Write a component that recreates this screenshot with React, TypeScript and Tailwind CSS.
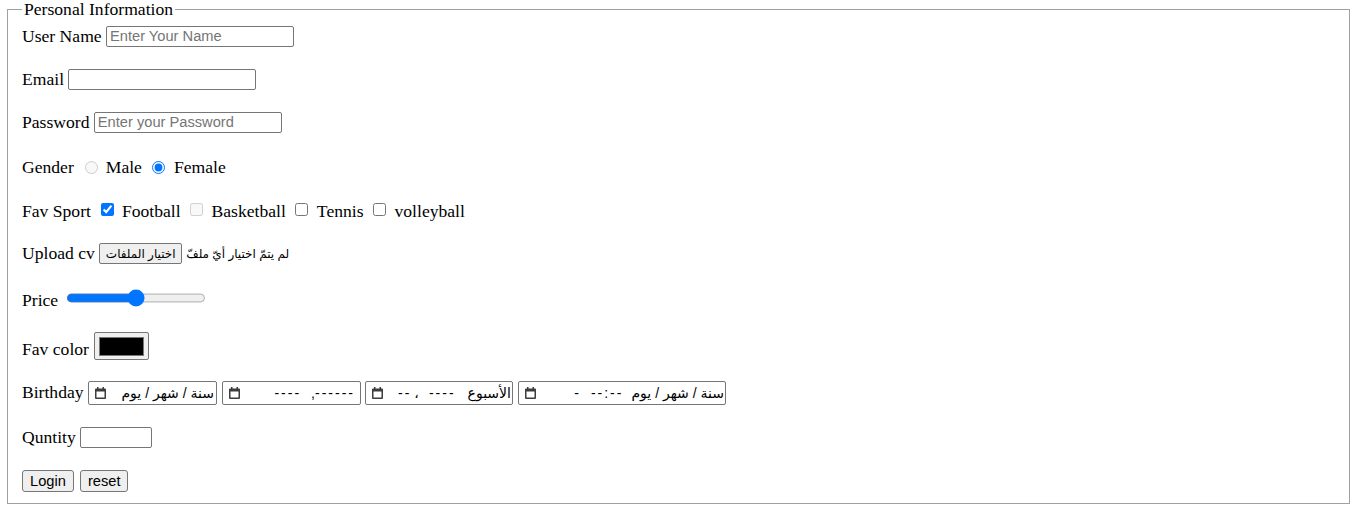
import React from 'react'

const Label: React.FC<{ children: React.ReactNode; className?: string }> = ({ children, className = '' }) => (
  <span className={'text-[17.6px] leading-[20px] whitespace-nowrap ' + className}>{children}</span>
)

const CalendarIcon: React.FC = () => (
  <svg width="11" height="12" viewBox="0 0 11 12" className="shrink-0">
    <path
      d="M2 0h1.5v1.5h4V0H9v1.5h1a1 1 0 0 1 1 1V11a1 1 0 0 1-1 1H1a1 1 0 0 1-1-1V2.5a1 1 0 0 1 1-1h1z M1.5 4.5V10.5h8V4.5z"
      fill="#3d3d3d"
      fillRule="evenodd"
    />
  </svg>
)

const inputCls =
  "h-[21px] rounded-[2px] border border-[#767676] bg-white px-[3px] text-[14.67px] font-['Liberation_Sans',Arial,sans-serif] text-black placeholder:text-[#757575] outline-none"

const btnCls =
  "h-[22px] rounded-[3px] border border-[#767676] bg-[#efefef] px-[7px] text-[14.67px] leading-[18px] font-['Liberation_Sans',Arial,sans-serif] text-black"

const dateCls =
  "flex h-[24px] items-center rounded-[2px] border border-[#767676] pl-[6px] text-[14px] font-['Liberation_Sans','DejaVu_Sans',sans-serif] text-black"

const App: React.FC = () => {
  return (
    <div className="h-[526px] w-[1362px] bg-white font-['Liberation_Serif','Times_New_Roman',serif] text-black">
      <fieldset className="ml-[7px] mr-[12px] border border-[#a0a0a0] px-[14px] pb-[11px]">
        <legend className="px-[2px] text-[17.6px] leading-[18px]">Personal Information</legend>

        {/* user name */}
        <div className="mt-[7px] flex h-[43px] items-start">
          <Label className="mt-[1px]">User Name</Label>
          <input type="text" placeholder="Enter Your Name" className={inputCls + ' ml-[4.4px] mt-[1px] w-[188px]'} />
        </div>

        <div className="flex h-[43px] items-start">
          <Label className="mt-[1px]">Email</Label>
          <input type="email" className={inputCls + ' ml-[4.4px] mt-[1px] w-[188px]'} />
        </div>

        <div className="flex h-[46px] items-start">
          <Label className="mt-[1px]">Password</Label>
          <input type="password" placeholder="Enter your Password" className={inputCls + ' ml-[4.4px] mt-[1px] w-[188px]'} />
        </div>

        {/* gender */}
        <div className="flex h-[44px] items-start">
          <Label>Gender</Label>
          <input type="radio" name="gender" disabled className="ml-[11px] mt-[4px] h-[13px] w-[13px]" />
          <Label className="ml-[8px]">Male</Label>
          <input type="radio" name="gender" defaultChecked className="ml-[10px] mt-[4px] h-[13px] w-[13px]" />
          <Label className="ml-[9px]">Female</Label>
        </div>

        {/* sports */}
        <div className="flex h-[42px] items-start">
          <Label>Fav Sport</Label>
          <input type="checkbox" defaultChecked className="ml-[10px] mt-[2px] h-[13px] w-[13px]" />
          <Label className="ml-[8px]">Football</Label>
          <input type="checkbox" disabled className="ml-[9px] mt-[2px] h-[13px] w-[13px]" />
          <Label className="ml-[9px]">Basketball</Label>
          <input type="checkbox" className="ml-[9px] mt-[2px] h-[13px] w-[13px]" />
          <Label className="ml-[9px]">Tennis</Label>
          <input type="checkbox" className="ml-[9px] mt-[2px] h-[13px] w-[13px]" />
          <Label className="ml-[9px]">volleyball</Label>
        </div>

        {/* upload */}
        <div className="flex h-[45px] items-start">
          <Label>Upload cv</Label>
          <button type="button" className="ml-[4.4px] h-[21px] w-[83px] rounded-[2px] border border-[#767676] bg-[#efefef] text-[12px] leading-[16px] font-['Liberation_Sans','DejaVu_Sans',sans-serif]" dir="rtl">
            اختيار الملفات
          </button>
          <span dir="rtl" className="ml-[4px] mt-[2px] text-[12px] leading-[18px] font-['Liberation_Sans','DejaVu_Sans',sans-serif] whitespace-nowrap">
            لم يتمّ اختيار أيّ ملفّ
          </span>
        </div>

        {/* price */}
        <div className="flex h-[44px] items-start">
          <Label className="mt-[2px]">Price</Label>
          <div className="ml-[7.5px] mt-[1px]">
            <input type="range" defaultValue={50} className="w-[128px] [zoom:1.1]" />
          </div>
        </div>

        {/* colour */}
        <div className="flex h-[49px] items-start">
          <Label className="mt-[7px]">Fav color</Label>
          <div className="ml-[5px] flex h-[28px] w-[55px] items-center justify-center rounded-[2px] border border-[#767676] bg-[#efefef]">
            <div className="h-[19px] w-[45px] border border-[#777777] bg-black" />
          </div>
        </div>

        {/* birthday */}
        <div className="flex h-[46px] items-start">
          <Label className="mt-[1px]">Birthday</Label>
          <div className={dateCls + ' ml-[4.4px] w-[129px] pr-[2px]'}>
            <CalendarIcon />
            <span dir="rtl" className="ml-auto whitespace-nowrap">سنة / شهر / يوم</span>
          </div>
          <div className={dateCls + ' ml-[5px] w-[139px] pr-[5px]'}>
            <CalendarIcon />
            <span className="ml-auto whitespace-nowrap tracking-[2px]">----</span>
            <span className="ml-[10px]">,</span>
            <span className="whitespace-nowrap tracking-[2px]">------</span>
          </div>
          <div className={dateCls + ' ml-[4px] w-[148px] pr-[1px]'}>
            <CalendarIcon />
            <span className="ml-auto whitespace-nowrap tracking-[2px]">--</span>
            <span className="ml-[3px]">،</span>
            <span className="ml-[10px] whitespace-nowrap tracking-[2px]">----</span>
            <span dir="rtl" className="ml-[12px] whitespace-nowrap">الأسبوع</span>
          </div>
          <div className={dateCls + ' ml-[5px] w-[208px] pr-[1px]'}>
            <CalendarIcon />
            <span className="ml-auto">-</span>
            <span className="ml-[12px] whitespace-nowrap tracking-[2px]">--:--</span>
            <span dir="rtl" className="ml-[8px] whitespace-nowrap">سنة / شهر / يوم</span>
          </div>
        </div>

        {/* quantity */}
        <div className="flex h-[43px] items-start">
          <Label>Quntity</Label>
          <input type="text" className={inputCls + ' ml-[4.4px] w-[72px]'} />
        </div>

        {/* buttons */}
        <div className="flex h-[22px] items-start">
          <button type="submit" className={btnCls}>Login</button>
          <button type="reset" className={btnCls + ' ml-[6px]'}>reset</button>
        </div>
      </fieldset>
    </div>
  )
}

export default App
